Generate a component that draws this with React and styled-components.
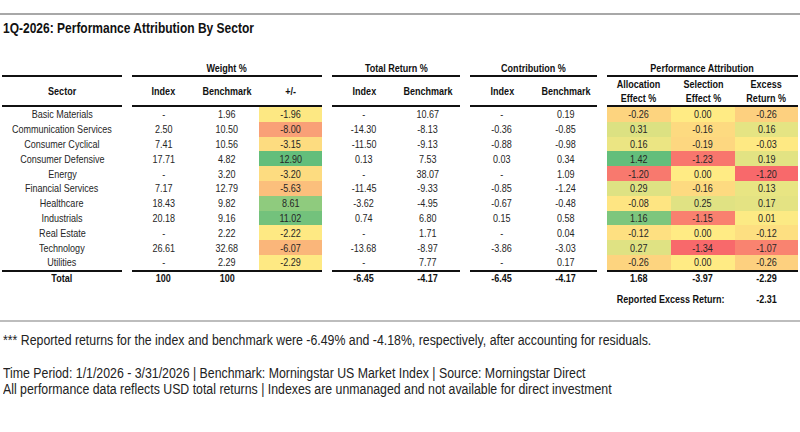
import React from "react";
import styled, { createGlobalStyle } from "styled-components";

const GlobalStyle = createGlobalStyle`
  html, body { margin: 0; padding: 0; background: #ffffff; }
  body {
    font-family: "Liberation Sans", Arial, sans-serif;
    color: #1f1f1f;
  }
`;

const Page = styled.div`
  width: 800px;
  height: 432px;
  overflow: hidden;
  padding-top: 13px;
  box-sizing: border-box;
`;

/* Narrow type: Arial-metric face pressed horizontally, like a condensed grotesque */
const Narrow = styled.span`
  display: inline-block;
  white-space: nowrap;
  transform: scaleX(${(p) => p.$s || 0.82});
  transform-origin: ${(p) => p.$origin || "center"};
`;

const Rule = styled.div`
  height: 0;
  border-top: 2px solid ${(p) => p.$color || "#a8a8a8"};
  margin-top: ${(p) => p.$mt || 0}px;
`;

const Title = styled.h1`
  margin: 5px 0 0 3px;
  font-size: 15px;
  line-height: 16px;
  font-weight: 700;
  color: #111;
  white-space: nowrap;
`;

const Table = styled.div`
  display: flex;
  flex-direction: column;
  margin-top: 24px;
`;

const Row = styled.div`
  display: flex;
  gap: 10px;
  padding-left: 2px;
  height: ${(p) => p.$h}px;
  margin-top: ${(p) => p.$mt || 0}px;
`;

const Group = styled.div`
  display: flex;
  align-items: stretch;
  width: ${(p) => p.$w}px;
  border-bottom: ${(p) => (p.$ruled ? "2px solid #111" : "none")};
`;

const Cell = styled.div`
  width: ${(p) => p.$w}px;
  flex: 0 0 auto;
  display: flex;
  align-items: center;
  justify-content: center;
  text-align: center;
  font-size: 11px;
  line-height: 14px;
  font-weight: ${(p) => (p.$bold ? 700 : 400)};
  color: ${(p) => (p.$bold ? "#111" : "#262626")};
  background: ${(p) => p.$bg || "transparent"};
  white-space: nowrap;
`;

const GroupTitle = styled.div`
  flex: 1 1 0;
  display: flex;
  align-items: center;
  justify-content: center;
  font-size: 11px;
  line-height: 14px;
  font-weight: 700;
  color: #111;
`;

const Note = styled.p`
  margin: ${(p) => p.$mt}px 0 0 3px;
  font-size: 14px;
  line-height: 16px;
  color: #222;
  white-space: nowrap;
`;

const W = { sector: 120, weight: 190, tr: 128, contrib: 127, attr: 191 };

const rows = [
  ["Basic Materials", "-", "1.96", ["-1.96", "#FDE883"], "-", "10.67", "-", "0.19",
    ["-0.26", "#FDD47F"], ["0.00", "#FFEB84"], ["-0.26", "#FDD07F"]],
  ["Communication Services", "2.50", "10.50", ["-8.00", "#F9A077"], "-14.30", "-8.13", "-0.36", "-0.85",
    ["0.31", "#DCE182"], ["-0.16", "#FDDA80"], ["0.16", "#E5E483"]],
  ["Consumer Cyclical", "7.41", "10.56", ["-3.15", "#FDDC80"], "-11.50", "-9.13", "-0.88", "-0.98",
    ["0.16", "#EBE583"], ["-0.19", "#FDD780"], ["-0.03", "#FEE983"]],
  ["Consumer Defensive", "17.71", "4.82", ["12.90", "#63BE7B"], "0.13", "7.53", "0.03", "0.34",
    ["1.42", "#63BE7B"], ["-1.23", "#F8766D"], ["0.19", "#E2E383"]],
  ["Energy", "-", "3.20", ["-3.20", "#FDDC80"], "-", "38.07", "-", "1.09",
    ["-1.20", "#F8796E"], ["0.00", "#FFEB84"], ["-1.20", "#F8696B"]],
  ["Financial Services", "7.17", "12.79", ["-5.63", "#FBBF7C"], "-11.45", "-9.33", "-0.85", "-1.24",
    ["0.29", "#DEE283"], ["-0.16", "#FDDA80"], ["0.13", "#E8E583"]],
  ["Healthcare", "18.43", "9.82", ["8.61", "#8FCB7E"], "-3.62", "-4.95", "-0.67", "-0.48",
    ["-0.08", "#FEE582"], ["0.25", "#E0E283"], ["0.17", "#E4E383"]],
  ["Industrials", "20.18", "9.16", ["11.02", "#73C27C"], "0.74", "6.80", "0.15", "0.58",
    ["1.16", "#7DC67D"], ["-1.15", "#F9806F"], ["0.01", "#FCEA84"]],
  ["Real Estate", "-", "2.22", ["-2.22", "#FEE983"], "-", "1.71", "-", "0.04",
    ["-0.12", "#FEE081"], ["0.00", "#FFEB84"], ["-0.12", "#FDDF81"]],
  ["Technology", "26.61", "32.68", ["-6.07", "#FAB67A"], "-13.68", "-8.97", "-3.86", "-3.03",
    ["0.27", "#DFE283"], ["-1.34", "#F8696B"], ["-1.07", "#F98370"]],
  ["Utilities", "-", "2.29", ["-2.29", "#FEE983"], "-", "7.77", "-", "0.17",
    ["-0.26", "#FDD47F"], ["0.00", "#FFEB84"], ["-0.26", "#FDD07F"]],
];

const C = ({ w, bold, bg, children }) => (
  <Cell $w={w} $bold={bold} $bg={bg}>
    {children !== undefined && children !== null ? <Narrow>{children}</Narrow> : null}
  </Cell>
);

const V = ({ v, w }) =>
  Array.isArray(v) ? <C w={w} bg={v[1]}>{v[0]}</C> : <C w={w}>{v}</C>;

const GT = ({ children }) => (
  <GroupTitle><Narrow>{children}</Narrow></GroupTitle>
);

export default function App() {
  return (
    <Page>
      <GlobalStyle />
      <Rule />
      <Title><Narrow $s={0.8} $origin="left">1Q-2026: Performance Attribution By Sector</Narrow></Title>
      <Table>
        <Row $h={17}>
          <Group $w={W.sector} $ruled />
          <Group $w={W.weight} $ruled><GT>Weight %</GT></Group>
          <Group $w={W.tr} $ruled><GT>Total Return %</GT></Group>
          <Group $w={W.contrib} $ruled><GT>Contribution %</GT></Group>
          <Group $w={W.attr} $ruled><GT>Performance Attribution</GT></Group>
        </Row>
        <Row $h={30}>
          <Group $w={W.sector} $ruled><C w={120} bold>Sector</C></Group>
          <Group $w={W.weight} $ruled>
            <C w={63} bold>Index</C>
            <C w={64} bold>Benchmark</C>
            <C w={63} bold>+/-</C>
          </Group>
          <Group $w={W.tr} $ruled>
            <C w={64} bold>Index</C>
            <C w={64} bold>Benchmark</C>
          </Group>
          <Group $w={W.contrib} $ruled>
            <C w={64} bold>Index</C>
            <C w={63} bold>Benchmark</C>
          </Group>
          <Group $w={W.attr} $ruled>
            <C w={64} bold>Allocation<br />Effect %</C>
            <C w={64} bold>Selection<br />Effect %</C>
            <C w={63} bold>Excess<br />Return %</C>
          </Group>
        </Row>
        {rows.map((r, i) => {
          const last = i === rows.length - 1;
          return (
            <Row key={r[0]} $h={last ? 16.8 : 14.8}>
              <Group $w={W.sector} $ruled={last}><C w={120}>{r[0]}</C></Group>
              <Group $w={W.weight} $ruled={last}>
                <V v={r[1]} w={63} /><V v={r[2]} w={64} /><V v={r[3]} w={63} />
              </Group>
              <Group $w={W.tr} $ruled={last}>
                <V v={r[4]} w={64} /><V v={r[5]} w={64} />
              </Group>
              <Group $w={W.contrib} $ruled={last}>
                <V v={r[6]} w={64} /><V v={r[7]} w={63} />
              </Group>
              <Group $w={W.attr} $ruled={last}>
                <V v={r[8]} w={64} /><V v={r[9]} w={64} /><V v={r[10]} w={63} />
              </Group>
            </Row>
          );
        })}
        <Row $h={13}>
          <Group $w={W.sector}><C w={120} bold>Total</C></Group>
          <Group $w={W.weight}>
            <C w={63} bold>100</C><C w={64} bold>100</C><C w={63} />
          </Group>
          <Group $w={W.tr}>
            <C w={64} bold>-6.45</C><C w={64} bold>-4.17</C>
          </Group>
          <Group $w={W.contrib}>
            <C w={64} bold>-6.45</C><C w={63} bold>-4.17</C>
          </Group>
          <Group $w={W.attr}>
            <C w={64} bold>1.68</C><C w={64} bold>-3.97</C><C w={63} bold>-2.29</C>
          </Group>
        </Row>
        <Row $h={14} $mt={7}>
          <Group $w={W.sector} />
          <Group $w={W.weight} />
          <Group $w={W.tr} />
          <Group $w={W.contrib} />
          <Group $w={W.attr}>
            <C w={128} bold>Reported Excess Return:</C>
            <C w={63} bold>-2.31</C>
          </Group>
        </Row>
      </Table>
      <Rule $color="#bdbdbd" $mt={14} />
      <Note $mt={10}><Narrow $s={0.88} $origin="left">*** Reported returns for the index and benchmark were -6.49% and -4.18%, respectively, after accounting for residuals.</Narrow></Note>
      <Note $mt={17}><Narrow $s={0.88} $origin="left">Time Period: 1/1/2026 - 3/31/2026 | Benchmark: Morningstar US Market Index | Source: Morningstar Direct</Narrow></Note>
      <Note $mt={0}><Narrow $s={0.88} $origin="left">All performance data reflects USD total returns | Indexes are unmanaged and not available for direct investment</Narrow></Note>
    </Page>
  );
}
